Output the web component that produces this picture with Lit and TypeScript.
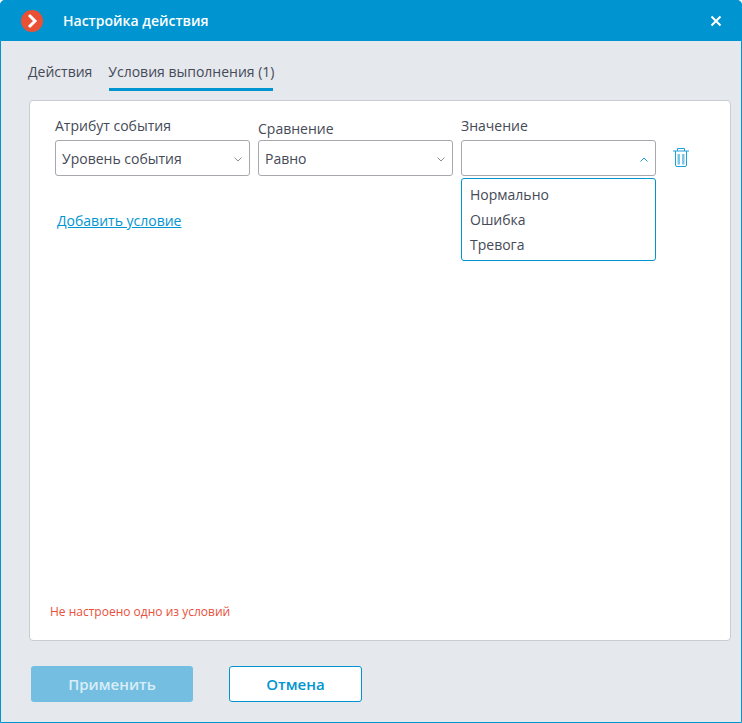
import { LitElement, html, css, svg } from "lit";
import { customElement } from "lit/decorators.js";

const chevronDown = svg`<path d="M.5 .5L4 4 7.5 .5" fill="none" stroke="#8a8f99" stroke-width="1"/>`;
const chevronUp = svg`<path d="M.5 4.5L4 1 7.5 4.5" fill="none" stroke="#1f9fd8" stroke-width="1"/>`;

@customElement("app-root")
export class AppRoot extends LitElement {
  static styles = css`
    :host {
      display: block;
      width: 742px;
      height: 723px;
      font-family: "Open Sans", sans-serif;
      font-size: 14px;
      color: #454a57;
    }
    .win {
      box-sizing: border-box;
      width: 742px;
      height: 723px;
      background: #e5e8ed;
      border: 1px solid #0095d1;
      border-radius: 5px 5px 0 0;
      display: flex;
      flex-direction: column;
    }
    .title {
      height: 41px;
      margin: -1px -1px 0;
      background: #0095d1;
      border-radius: 5px 5px 0 0;
      display: flex;
      align-items: center;
      padding: 0 20px 0 21px;
      flex: none;
      color: #fff;
    }
    .logo { width: 22px; height: 22px; flex: none; }
    .title-text {
      font-weight: 600;
      font-size: 14px;
      margin-left: 20px;
      flex: 1;
    }
    .close { width: 12px; height: 12px; flex: none; }
    .tabs {
      display: flex;
      gap: 16px;
      margin: 20px 0 0 27px;
      height: 39px;
      flex: none;
    }
    .tab {
      height: 29px;
      line-height: 22px;
      box-sizing: border-box;
      width: fit-content;
      position: relative;
    }
    .tab.on::after {
      content: "";
      position: absolute;
      left: 1px;
      right: 1px;
      top: 27px;
      height: 3px;
      background: #0095d1;
    }
    .card {
      box-sizing: border-box;
      height: 541px;
      margin: 0 10px 0 28px;
      background: #fff;
      border: 1px solid #c9ccd3;
      border-radius: 4px;
      position: relative;
      display: flex;
      flex-direction: column;
      padding: 15px 0 0 25px;
      flex: none;
    }
    .row { display: flex; gap: 8px; align-items: flex-end; }
    .field { width: 195px; position: relative; }
    .label { line-height: 20px; margin-bottom: 4px; }
    .label.low { margin-bottom: 1px; }
    .select {
      box-sizing: border-box;
      height: 36px;
      border: 1px solid #a6a8ad;
      border-radius: 3px;
      display: flex;
      align-items: center;
      justify-content: space-between;
      padding: 2px 7px 0 6px;
      line-height: 32px;
    }
    .select svg { width: 8px; height: 5px; flex: none; }
    .menu {
      position: absolute;
      left: 0;
      right: 0;
      top: 62px;
      box-sizing: border-box;
      height: 83px;
      border: 1px solid #0095d1;
      border-radius: 3px;
      background: #fff;
      padding: 3px 8px;
    }
    .menu div { height: 25px; line-height: 25px; }
    .trash { width: 18px; height: 20px; margin: 0 0 8px 8px; flex: none; }
    .link {
      margin: 35px 0 0 2px;
      line-height: 20px;
      color: #0095d1;
      text-decoration: underline;
      width: fit-content;
    }
    .err {
      margin: auto 0 20px -5px;
      font-size: 12px;
      line-height: 16px;
      color: #e8503a;
    }
    .btns {
      display: flex;
      gap: 36px;
      margin: 25px 0 0 30px;
    }
    .btn {
      box-sizing: border-box;
      height: 36px;
      border-radius: 3px;
      display: flex;
      align-items: center;
      justify-content: center;
      font-weight: 600;
      font-size: 15px;
    }
    .apply { width: 162px; background: #74bfe1; color: #d9eef8; }
    .cancel { width: 133px; background: #fff; border: 1px solid #0095d1; color: #0095d1; }
  `;

  render() {
    return html`
      <div class="win">
        <div class="title">
          <svg class="logo" viewBox="0 0 22 22">
            <circle cx="11" cy="11" r="11" fill="#ea5034"/>
            <path d="M8 5l6 6-6 6" fill="none" stroke="#fff" stroke-width="3"/>
          </svg>
          <div class="title-text">Настройка действия</div>
          <svg class="close" viewBox="0 0 12 12">
            <path d="M1.5 1.5l9 9M10.5 1.5l-9 9" stroke="#fff" stroke-width="2" fill="none"/>
          </svg>
        </div>
        <div class="tabs">
          <div class="tab">Действия</div>
          <div class="tab on">Условия выполнения (1)</div>
        </div>
        <div class="card">
          <div class="row">
            <div class="field">
              <div class="label">Атрибут события</div>
              <div class="select"><span>Уровень события</span><svg viewBox="0 0 8 5">${chevronDown}</svg></div>
            </div>
            <div class="field">
              <div class="label low">Сравнение</div>
              <div class="select"><span>Равно</span><svg viewBox="0 0 8 5">${chevronDown}</svg></div>
            </div>
            <div class="field">
              <div class="label">Значение</div>
              <div class="select"><span></span><svg viewBox="0 0 8 5">${chevronUp}</svg></div>
              <div class="menu">
                <div>Нормально</div>
                <div>Ошибка</div>
                <div>Тревога</div>
              </div>
            </div>
            <svg class="trash" viewBox="0 0 18 20">
              <path d="M5.5 3V.5h7V3" fill="none" stroke="#1f9fd8"/>
              <path d="M1 3h16" stroke="#1f9fd8" fill="none"/>
              <path d="M3.5 3v14a1.5 1.5 0 0 0 1.5 1.5h8a1.5 1.5 0 0 0 1.5-1.5V3" fill="none" stroke="#1f9fd8"/>
              <path d="M6.75 6v10.5M11.25 6v10.5" stroke="#7cc6e8" stroke-width="2.5" fill="none"/>
            </svg>
          </div>
          <div class="link">Добавить условие</div>
          <div class="err">Не настроено одно из условий</div>
        </div>
        <div class="btns">
          <div class="btn apply">Применить</div>
          <div class="btn cancel">Отмена</div>
        </div>
      </div>
    `;
  }
}
